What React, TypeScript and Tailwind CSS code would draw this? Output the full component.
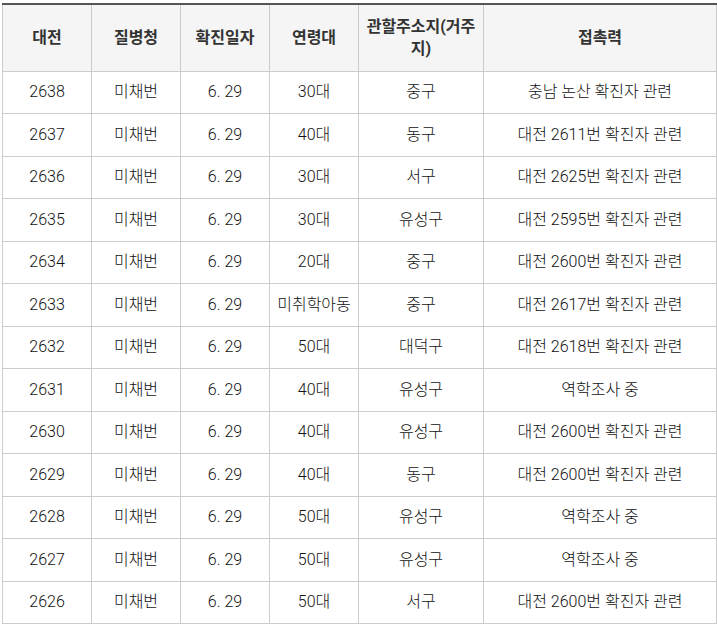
import React from "react";

const rows: string[][] = [
  ["2638", "미채번", "6. 29", "30대", "중구", "충남 논산 확진자 관련"],
  ["2637", "미채번", "6. 29", "40대", "동구", "대전 2611번 확진자 관련"],
  ["2636", "미채번", "6. 29", "30대", "서구", "대전 2625번 확진자 관련"],
  ["2635", "미채번", "6. 29", "30대", "유성구", "대전 2595번 확진자 관련"],
  ["2634", "미채번", "6. 29", "20대", "중구", "대전 2600번 확진자 관련"],
  ["2633", "미채번", "6. 29", "미취학아동", "중구", "대전 2617번 확진자 관련"],
  ["2632", "미채번", "6. 29", "50대", "대덕구", "대전 2618번 확진자 관련"],
  ["2631", "미채번", "6. 29", "40대", "유성구", "역학조사 중"],
  ["2630", "미채번", "6. 29", "40대", "유성구", "대전 2600번 확진자 관련"],
  ["2629", "미채번", "6. 29", "40대", "동구", "대전 2600번 확진자 관련"],
  ["2628", "미채번", "6. 29", "50대", "유성구", "역학조사 중"],
  ["2627", "미채번", "6. 29", "50대", "유성구", "역학조사 중"],
  ["2626", "미채번", "6. 29", "50대", "서구", "대전 2600번 확진자 관련"],
];

const headers = ["대전", "질병청", "확진일자", "연령대", "관할주소지(거주지)", "접촉력"];
const widths = ["w-[89px]", "w-[89px]", "w-[89px]", "w-[89px]", "w-[125px]", "w-[233px]"];

export default function App() {
  return (
    <div
      className="pl-[2px] pt-[3px] bg-white"
      style={{ fontFamily: 'Roboto, "Noto Sans CJK KR", sans-serif' }}
    >
      <table className="border-collapse table-fixed w-[715px] text-[16px] text-[#111]">
        <thead>
          <tr className="bg-[#f5f5f5]">
            {headers.map((h, i) => (
              <th
                key={i}
                className={`${widths[i]} h-[67px] border border-[#ccc] border-t-[#555] border-t-2 px-[2px] font-bold text-[#333] leading-[22px]`}
              >
                {h}
              </th>
            ))}
          </tr>
        </thead>
        <tbody>
          {rows.map((r, ri) => (
            <tr key={ri}>
              {r.map((c, ci) => (
                <td
                  key={ci}
                  className="h-[42.5px] border border-[#ccc] text-center p-0 leading-none font-light"
                >
                  {c}
                </td>
              ))}
            </tr>
          ))}
        </tbody>
      </table>
    </div>
  );
}
